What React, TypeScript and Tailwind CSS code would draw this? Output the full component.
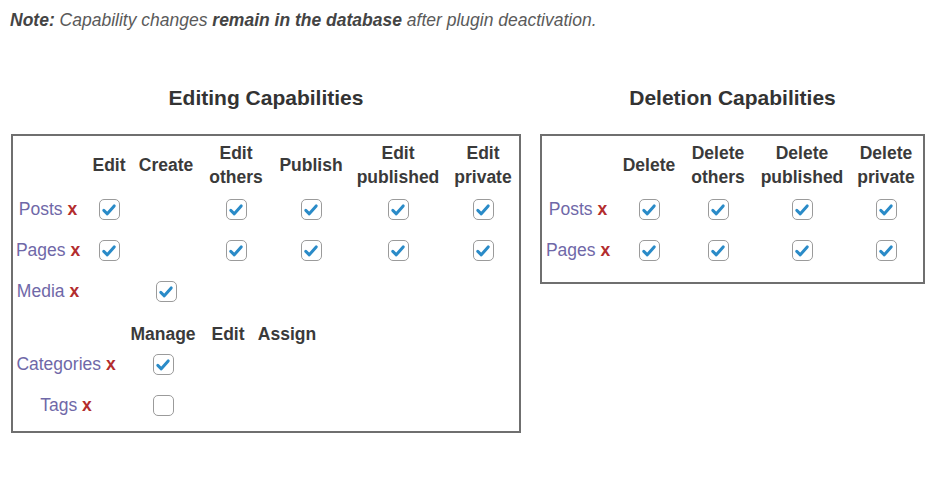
import React from "react";

const font = { fontFamily: '"Liberation Sans", Arial, sans-serif' };

const Check = ({ on = true }: { on?: boolean }) => (
  <span className="inline-flex h-[21px] w-[21px] items-center justify-center rounded-[5px] border-[1.5px] border-[#9b9b9b] bg-white">
    {on && (
      <svg width="16" height="16" viewBox="0 0 16 16">
        <path d="M2.8 8.4 L6.3 11.8 L13.2 3.9" fill="none" stroke="#2a8bc8" strokeWidth="3" strokeLinecap="round" strokeLinejoin="round" />
      </svg>
    )}
  </span>
);

const Label = ({ name }: { name: string }) => (
  <span className="text-[17.5px] text-[#6f68a8]">
    {name} <span className="font-bold text-[#b32d2e]">x</span>
  </span>
);

const Head = ({ lines }: { lines: string[] }) => (
  <div className="flex flex-col items-center justify-center text-[17.5px] font-bold leading-[24px] text-[#3a3a3a]">
    {lines.map((l) => (
      <span key={l}>{l}</span>
    ))}
  </div>
);

const Cell = ({ on }: { on?: boolean | null }) => (
  <div className="flex h-[41px] items-center justify-center">{on != null && <Check on={on} />}</div>
);

const LabelCell = ({ name }: { name: string }) => (
  <div className="flex h-[41px] items-center justify-center whitespace-nowrap">
    <Label name={name} />
  </div>
);

const editCols = "grid grid-cols-[70px_52px_62px_78px_72px_102px_68px]";
const editHeads = [["Edit"], ["Create"], ["Edit", "others"], ["Publish"], ["Edit", "published"], ["Edit", "private"]];
const editRows: { name: string; vals: (boolean | null)[] }[] = [
  { name: "Posts", vals: [true, null, true, true, true, true] },
  { name: "Pages", vals: [true, null, true, true, true, true] },
  { name: "Media", vals: [null, true, null, null, null, null] },
];

const delCols = "grid grid-cols-[72px_70px_68px_100px_68px]";
const delHeads = [["Delete"], ["Delete", "others"], ["Delete", "published"], ["Delete", "private"]];

const App = () => {
  return (
    <div className="min-h-[481px] w-[932px] bg-white pl-[10px] pt-[8px]" style={font}>
      <p className="text-[17.5px] italic leading-[24px] text-[#5a5a5a]">
        <b className="text-[#444]">Note:</b> Capability changes <b className="text-[#444]">remain in the database</b> after plugin deactivation.
      </p>

      <div className="mt-[52px] flex items-start gap-[19px] pl-[1px]">
        {/* editing */}
        <div className="w-[510px]">
          <h2 className="text-center text-[21px] font-bold leading-[28px] text-[#333]">Editing Capabilities</h2>
          <div className="mt-[22px] border-2 border-[#6f6f6f] pb-[5px] pt-[5px]">
            <div className={editCols}>
              <div />
              {editHeads.map((h) => (
                <Head key={h.join()} lines={h} />
              ))}
            </div>
            {editRows.map((r) => (
              <div key={r.name} className={editCols}>
                <LabelCell name={r.name} />
                {r.vals.map((v, i) => (
                  <Cell key={i} on={v} />
                ))}
              </div>
            ))}
            <div className="grid grid-cols-[106px_88px_42px_76px] grid-rows-[20px_41px_41px] pt-[12px]">
              <div />
              <div className="flex items-center justify-center text-[17.5px] font-bold text-[#3a3a3a]">Manage</div>
              <div className="flex items-center justify-center text-[17.5px] font-bold text-[#3a3a3a]">Edit</div>
              <div className="flex items-center justify-center text-[17.5px] font-bold text-[#3a3a3a]">Assign</div>
              <LabelCell name="Categories" />
              <Cell on={true} />
              <Cell />
              <Cell />
              <LabelCell name="Tags" />
              <Cell on={false} />
              <Cell />
              <Cell />
            </div>
          </div>
        </div>

        {/* deletion */}
        <div className="w-[385px]">
          <h2 className="text-center text-[21px] font-bold leading-[28px] text-[#333]">Deletion Capabilities</h2>
          <div className="mt-[22px] border-2 border-[#6f6f6f] pb-[11px] pt-[5px]">
            <div className={delCols}>
              <div />
              {delHeads.map((h) => (
                <Head key={h.join()} lines={h} />
              ))}
            </div>
            {["Posts", "Pages"].map((n) => (
              <div key={n} className={delCols}>
                <LabelCell name={n} />
                <Cell on />
                <Cell on />
                <Cell on />
                <Cell on />
              </div>
            ))}
          </div>
        </div>
      </div>
    </div>
  );
};

export default App;
